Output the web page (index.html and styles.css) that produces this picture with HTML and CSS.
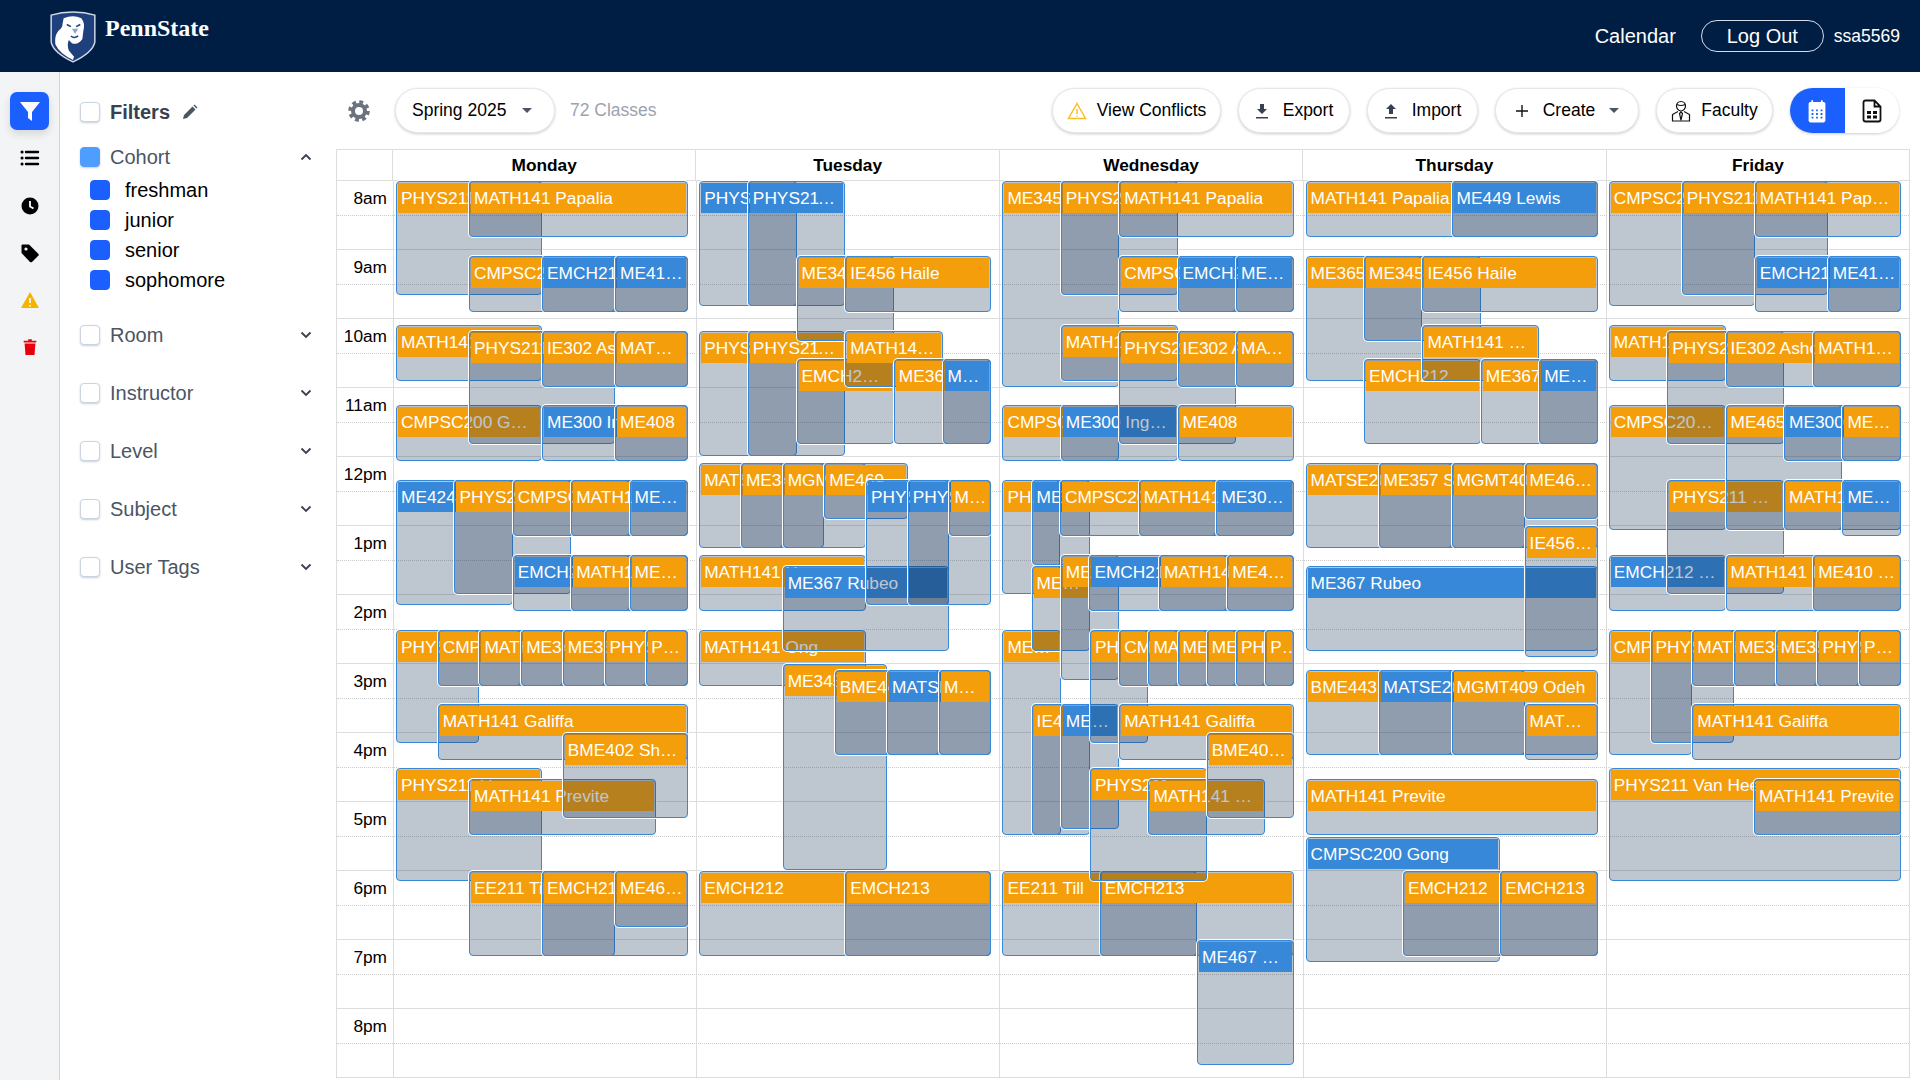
FILE: index.html
```html
<!DOCTYPE html>
<html lang="en">
<head>
    <meta charset="UTF-8">
    <meta name="viewport" content="width=device-width, initial-scale=1.0">
    <title>Class Calendar</title>
    <link rel="stylesheet" href="styles.css">
</head>
<body>

<header class="navbar">
    <div class="brand">
        <svg class="shield" viewBox="0 0 46 50">
            <path d="M2 4 Q12 1 23 1 Q34 1 44 4 V30 Q42 40 23 49 Q4 40 2 30Z" fill="#1e407c" stroke="#d5dbe6" stroke-width="1.4"/>
            <path d="M14 7 Q23 3 31 7 Q35 12 33 19 L32 27 Q28 33 22 31 L19 28 Q17 33 19 38 L24 44 L23 47 Q10 41 6 32 Q5 24 9 19 Q13 16 13 12Z" fill="#fff"/>
            <path d="M17 13 L21 15 M26 15 L30 13 M21 24 Q24 27 28 24" stroke="#1e407c" stroke-width="1.5" fill="none"/>
            <path d="M22 17 L25 22 L28 17Z" fill="#8fa6cc"/>
        </svg>
        <span class="wordmark">PennState</span>
    </div>
    <nav class="nav-right">
        <span class="nav-link">Calendar</span>
        <button class="logout">Log Out</button>
        <span class="user">ssa5569</span>
    </nav>
</header>

<div class="main">
    <aside class="rail">
        <button class="rail-btn active">
            <svg viewBox="0 0 24 24" width="24" height="24"><path d="M2 3h20l-8 10v9l-4-3v-6z" fill="#fff"/></svg>
        </button>
        <button class="rail-btn">
            <svg viewBox="0 0 20 20" width="20" height="20"><path d="M2 4h.1M2 10h.1M2 16h.1" stroke="#000" stroke-width="3" stroke-linecap="round"/><path d="M6 4h12M6 10h12M6 16h12" stroke="#000" stroke-width="2.4" stroke-linecap="round"/></svg>
        </button>
        <button class="rail-btn">
            <svg viewBox="0 0 20 20" width="20" height="20"><circle cx="10" cy="10" r="8.5" fill="#000"/><path d="M10 5v5.5l3.5 2" stroke="#fff" stroke-width="1.8" fill="none"/></svg>
        </button>
        <button class="rail-btn">
            <svg viewBox="0 0 20 20" width="20" height="20"><path d="M1.5 2.5Q1.5 1.5 2.5 1.5H9L18.5 11Q19 12 18.5 12.5L12 19Q11 19.5 10 19L1.5 10Z" fill="#000"/><circle cx="6" cy="6" r="1.6" fill="#f3f4f6"/></svg>
        </button>
        <button class="rail-btn">
            <svg viewBox="0 0 20 20" width="20" height="20"><path d="M10 2L19 18H1Z" fill="#f4b400"/><path d="M10 8v5M10 15v1.4" stroke="#fff" stroke-width="1.6"/></svg>
        </button>
        <button class="rail-btn">
            <svg viewBox="0 0 20 20" width="18" height="18"><path d="M4 6h12l-1 13H5Z M3 3h14v2H3Z M8 1.500h4V3H8Z" fill="#e8000d"/></svg>
        </button>
    </aside>

    <section class="filters">
        <div class="filter-title">
            <span class="check"></span>
            <span class="title-text">Filters</span>
            <svg viewBox="0 0 16 16" width="16" height="16"><path d="M1 15l1-4 8.500-8.500 3 3L5 14Z M11.500 1.500l1-1 3 3-1 1Z" fill="#4b5563"/></svg>
        </div>

        <div class="group-row group-open">
            <span class="check check-soft"></span>
            <span class="group-name">Cohort</span>
            <svg class="chev" viewBox="0 0 12 8" width="12" height="8"><path d="M1.500 6.500L6 2l4.500 4.500" stroke="#374151" stroke-width="1.800" fill="none"/></svg>
        </div>
        <ul class="group-items">
            <li><span class="check check-on"></span>freshman</li>
            <li><span class="check check-on"></span>junior</li>
            <li><span class="check check-on"></span>senior</li>
            <li><span class="check check-on"></span>sophomore</li>
        </ul>

        <div class="group-row">
            <span class="check"></span>
            <span class="group-name">Room</span>
            <svg class="chev" viewBox="0 0 12 8" width="12" height="8"><path d="M1.500 1.500L6 6l4.500-4.500" stroke="#374151" stroke-width="1.800" fill="none"/></svg>
        </div>
        <div class="group-row">
            <span class="check"></span>
            <span class="group-name">Instructor</span>
            <svg class="chev" viewBox="0 0 12 8" width="12" height="8"><path d="M1.500 1.500L6 6l4.500-4.500" stroke="#374151" stroke-width="1.800" fill="none"/></svg>
        </div>
        <div class="group-row">
            <span class="check"></span>
            <span class="group-name">Level</span>
            <svg class="chev" viewBox="0 0 12 8" width="12" height="8"><path d="M1.500 1.500L6 6l4.500-4.500" stroke="#374151" stroke-width="1.800" fill="none"/></svg>
        </div>
        <div class="group-row">
            <span class="check"></span>
            <span class="group-name">Subject</span>
            <svg class="chev" viewBox="0 0 12 8" width="12" height="8"><path d="M1.500 1.500L6 6l4.500-4.500" stroke="#374151" stroke-width="1.800" fill="none"/></svg>
        </div>
        <div class="group-row">
            <span class="check"></span>
            <span class="group-name">User Tags</span>
            <svg class="chev" viewBox="0 0 12 8" width="12" height="8"><path d="M1.500 1.500L6 6l4.500-4.500" stroke="#374151" stroke-width="1.800" fill="none"/></svg>
        </div>
    </section>

    <section class="content">
        <div class="toolbar">
            <svg class="gear" viewBox="0 0 22 22" width="22" height="22">
                <circle cx="11" cy="11" r="6" fill="none" stroke="#6b7280" stroke-width="4"/>
                <circle cx="11" cy="11" r="9" fill="none" stroke="#6b7280" stroke-width="3.600" stroke-dasharray="3.800 3.270"/>
            </svg>
            <button class="pill term">Spring 2025<span class="caret"></span></button>
            <span class="count">72 Classes</span>
            <div class="actions">
                <button class="pill w-conflicts">
                    <svg viewBox="0 0 20 20" width="20" height="20"><path d="M10 2.500L18.500 17.500H1.500Z M10 8v5 M10 14.500v1.200" fill="none" stroke="#fbbf24" stroke-width="1.500"/></svg>
                    View Conflicts
                </button>
                <button class="pill w-export">
                    <svg viewBox="0 0 14 16" width="14" height="16"><path d="M5 1h4v5h3L7 11 2 6h3Z M1 14h12v1.500H1Z" fill="#374151"/></svg>
                    Export
                </button>
                <button class="pill w-import">
                    <svg viewBox="0 0 14 16" width="14" height="16"><path d="M5 11h4V6h3L7 1 2 6h3Z M1 14h12v1.500H1Z" fill="#374151"/></svg>
                    Import
                </button>
                <button class="pill w-create">
                    <svg viewBox="0 0 14 14" width="14" height="14"><path d="M7 1v12M1 7h12" stroke="#111" stroke-width="1.400"/></svg>
                    Create<span class="caret"></span>
                </button>
                <button class="pill w-faculty">
                    <svg viewBox="0 0 20 22" width="20" height="22"><path d="M10 1.500c-3 0-4.500 2-4.500 4.500s2 5 4.500 5 4.500-2.500 4.500-5-1.500-4.500-4.500-4.500Z M6 4.500Q10 6.500 14 4.500 M7 11.500L1.500 14.500V21h17v-6.500L13 11.500 M10 12l-1.500 1.500L10 20l1.500-6.500Z" fill="none" stroke="#111" stroke-width="1.200"/></svg>
                    Faculty
                </button>
                <div class="view-toggle">
                    <button class="toggle-btn toggle-on">
                        <svg viewBox="0 0 18 20" width="22" height="24"><path d="M2 4Q2 2.500 3.500 2.500h11Q16 2.500 16 4v14q0 1.500-1.500 1.500h-11Q2 19.500 2 18Z" fill="#fff"/><path d="M5 1v3M13 1v3" stroke="#fff" stroke-width="1.500"/><path d="M4.500 9.500h1.500M8.250 9.500h1.500M12 9.500h1.500M4.500 12.500h1.500M8.250 12.500h1.500M12 12.500h1.500M4.500 15.500h1.500M8.250 15.500h1.500M12 15.500h1.500" stroke="#1b5fff" stroke-width="1.500"/></svg>
                    </button>
                    <button class="toggle-btn">
                        <svg viewBox="0 0 20 24" width="20" height="24"><path d="M1.500 3.500Q1.500 1.500 3.500 1.500h9l6 6v13q0 2-2 2h-13q-2 0-2-2Z M12.500 1.500V7.500h6" fill="none" stroke="#111" stroke-width="1.800"/><path d="M5 12h4v3H5Z M11 12h4v3h-4Z M5 16.500h4v3H5Z M11 16.500h4v3h-4Z" fill="#111"/></svg>
                    </button>
                </div>
            </div>
        </div>

        <div class="calendar">
            <div class="cal-head">
                <div class="corner"></div>
                <div class="day-name">Monday</div>
                <div class="day-name">Tuesday</div>
                <div class="day-name">Wednesday</div>
                <div class="day-name">Thursday</div>
                <div class="day-name">Friday</div>
            </div>
            <div class="cal-body">
                <div class="hour"><span class="hour-label">8am</span></div>
                <div class="hour"><span class="hour-label">9am</span></div>
                <div class="hour"><span class="hour-label">10am</span></div>
                <div class="hour"><span class="hour-label">11am</span></div>
                <div class="hour"><span class="hour-label">12pm</span></div>
                <div class="hour"><span class="hour-label">1pm</span></div>
                <div class="hour"><span class="hour-label">2pm</span></div>
                <div class="hour"><span class="hour-label">3pm</span></div>
                <div class="hour"><span class="hour-label">4pm</span></div>
                <div class="hour"><span class="hour-label">5pm</span></div>
                <div class="hour"><span class="hour-label">6pm</span></div>
                <div class="hour"><span class="hour-label">7pm</span></div>
                <div class="hour"><span class="hour-label">8pm</span></div>
                <div class="days" id="days">
                    <div class="day"></div>
                    <div class="day"></div>
                    <div class="day"></div>
                    <div class="day"></div>
                    <div class="day"></div>
                </div>
            </div>
        </div>
    </section>
</div>

<script src="calendar.js"></script>
</body>
</html>
```

FILE: styles.css
```css
* {
    box-sizing: border-box;
}
body {
    font-family: "Liberation Sans", Arial, sans-serif;
    margin: 0;
    height: 1080px;
    overflow: hidden;
    background-color: white;
    color: black;
}
button {
    font: inherit;
    color: inherit;
    background: none;
    border: none;
    padding: 0;
}

/* top bar */
.navbar {
    height: 72px;
    background-color: #001e44;
    color: white;
    display: flex;
    align-items: center;
    justify-content: space-between;
    padding: 0 20px 0 49px;
}
.brand {
    display: flex;
    align-items: center;
    gap: 8px;
}
.shield {
    width: 48px;
    height: 52px;
    margin-top: 2px;
}
.wordmark {
    font-family: "Liberation Serif", serif;
    font-weight: bold;
    font-size: 24px;
    margin-bottom: 16px;
}
.nav-right {
    display: flex;
    align-items: center;
}
.nav-link {
    font-size: 20px;
    margin-right: 25px;
}
.logout {
    width: 123px;
    height: 32px;
    border: 1px solid #d5dbe6;
    border-radius: 16px;
    font-size: 20px;
    margin-right: 10px;
}
.user {
    font-size: 17.5px;
}

.main {
    display: flex;
    height: 1008px;
}

/* icon rail */
.rail {
    width: 60px;
    background-color: #f3f4f6;
    border-right: 1px solid #d1d5db;
    padding: 20px 0 0 10px;
    display: flex;
    flex-direction: column;
    gap: 9.3px;
}
.rail-btn {
    width: 39px;
    height: 38px;
    display: flex;
    align-items: center;
    justify-content: center;
    border-radius: 7px;
}
.rail-btn.active {
    background-color: #1b5fff;
    box-shadow: 0 4px 8px rgba(0, 0, 0, 0.12);
}

/* filter panel */
.filters {
    width: 276px;
    padding: 30px 24px 0 20px;
    font-size: 20px;
}
.check {
    width: 20px;
    height: 20px;
    flex: none;
    border: 1px solid #cbd5e1;
    border-radius: 4px;
    background-color: white;
    box-shadow: 0 1px 2px rgba(30, 64, 124, 0.25);
}
.check-soft {
    background-color: #4f9dff;
    border-color: #4f9dff;
}
.check-on {
    background-color: #1b5fff;
    border-color: #1b5fff;
    box-shadow: none;
}
.filter-title {
    display: flex;
    align-items: center;
    height: 20px;
    gap: 10px;
    margin-bottom: 25px;
}
.title-text {
    font-weight: bold;
    color: #374151;
    margin-right: 2px;
}
.group-row {
    display: flex;
    align-items: center;
    height: 58px;
    gap: 10px;
    color: #4b5563;
}
.group-open {
    height: 20px;
    margin-bottom: 8px;
}
.group-name {
    flex: 1;
}
.group-items {
    list-style: none;
    margin: 0 0 11px 0;
    padding: 0 0 0 10px;
    color: black;
}
.group-items li {
    display: flex;
    align-items: center;
    height: 30px;
    gap: 15px;
}

/* toolbar */
.content {
    flex: 1;
    min-width: 0;
    padding-right: 10px;
}
.toolbar {
    height: 77px;
    display: flex;
    align-items: center;
    padding: 0 11px 0 12px;
    font-size: 17.5px;
}
.gear {
    margin-right: 25px;
}
.pill {
    height: 45px;
    display: flex;
    align-items: center;
    justify-content: center;
    gap: 10px;
    border: 1px solid #e5e7eb;
    border-radius: 23px;
    background-color: white;
    box-shadow: 0 1px 3px rgba(0, 0, 0, 0.2);
    white-space: nowrap;
}
.term {
    width: 160px;
    justify-content: flex-start;
    padding-left: 16px;
    gap: 16px;
}
.caret {
    width: 0;
    height: 0;
    border-left: 5px solid transparent;
    border-right: 5px solid transparent;
    border-top: 5px solid #4b5563;
}
.count {
    color: #9ca3af;
    margin-left: 15px;
}
.actions {
    margin-left: auto;
    display: flex;
    align-items: center;
    gap: 17px;
}
.w-conflicts { width: 169px; }
.w-export { width: 112px; gap: 14px; }
.w-import { width: 111px; gap: 14px; }
.w-create { width: 144px; gap: 14px; }
.w-faculty { width: 117px; }
.view-toggle {
    display: flex;
    width: 109px;
    height: 45px;
    border-radius: 23px;
    overflow: hidden;
    box-shadow: 0 1px 3px rgba(0, 0, 0, 0.2);
}
.toggle-btn {
    flex: 1;
    display: flex;
    align-items: center;
    justify-content: center;
    background-color: white;
}
.toggle-on {
    background-color: #1b5fff;
}

/* calendar grid */
.calendar {
    border: 1px solid #ddd;
    border-bottom: none;
}
.cal-head {
    display: flex;
    height: 31px;
    border-bottom: 1px solid #ddd;
}
.corner {
    width: 56px;
    border-right: 1px solid #ddd;
}
.day-name {
    flex: 1;
    text-align: center;
    font-weight: bold;
    font-size: 17.3px;
    line-height: 31px;
    border-right: 1px solid #ddd;
}
.day-name:last-child {
    border-right: none;
}
.cal-body {
    position: relative;
}
.hour {
    position: relative;
    height: 69px;
    border-bottom: 1px solid #ddd;
}
.hour::after {
    content: "";
    position: absolute;
    left: 0;
    right: 0;
    top: 34px;
    border-top: 1px dotted #ccc;
}
.hour-label {
    display: block;
    width: 50px;
    text-align: right;
    font-size: 17.3px;
    line-height: 34px;
}
.days {
    position: absolute;
    left: 56px;
    right: 0;
    top: 0;
    bottom: 0;
    display: flex;
    border-left: 1px solid #ddd;
}
.day {
    position: relative;
    flex: 1;
    border-right: 1px solid #ddd;
}
.day:last-child {
    border-right: none;
}

/* class events */
.event {
    position: absolute;
    border: 1px solid #3788d8;
    border-radius: 4px;
    background-color: rgba(23, 51, 87, 0.28);
    box-shadow: 0 0 0 1px white;
    overflow: hidden;
}
.event-head {
    height: 30px;
    margin: 1px 1px 0 1px;
    padding: 0 3px;
    line-height: 30px;
    font-size: 17.3px;
    color: white;
    white-space: nowrap;
    overflow: hidden;
    text-overflow: ellipsis;
}
.orange {
    background-color: #f59e0b;
}
.blue {
    background-color: #3788d8;
}
```

FILE: calendar.js
```js
// One list per weekday, painted in order, later ones on top.
// [from, to, startMin, endMin, label, colour] - from/to are fractions of the day column, minutes count from 8am
const schedule = [
    [
        [0, .5, 0, 100, 'PHYS211 Van Heer', 'orange'],
        [.25, 1, 0, 50, 'MATH141 Papalia', 'orange'],
        [.25, .75, 65, 115, 'CMPSC200 Gong', 'orange'],
        [.5, 1, 65, 115, 'EMCH212 Zhang', 'blue'],
        [.75, 1, 65, 115, 'ME410 Kim', 'blue'],
        [0, .5, 125, 175, 'MATH141 Ong', 'orange'],
        [0, .5, 195, 245, 'CMPSC200 Gong', 'orange'],
        [.25, .75, 130, 230, 'PHYS211 Van Heer', 'orange'],
        [.5, 1, 130, 180, 'IE302 Ashour', 'orange'],
        [.75, 1, 130, 180, 'MATH141 Lee', 'orange'],
        [.5, 1, 195, 245, 'ME300 Ingalls', 'blue'],
        [.75, 1, 195, 245, 'ME408', 'orange'],
        [0, .4, 260, 370, 'ME424 Ray', 'blue'],
        [.2, .6, 260, 360, 'PHYS211 Hong', 'orange'],
        [.4, .8, 260, 310, 'CMPSC200 Gong', 'orange'],
        [.6, 1, 260, 310, 'MATH141 Lee', 'orange'],
        [.8, 1, 260, 310, 'ME300 Ingalls', 'blue'],
        [.4, .8, 325, 375, 'EMCH212 Zhang', 'blue'],
        [.6, 1, 325, 375, 'MATH141 Lee', 'orange'],
        [.8, 1, 325, 375, 'ME410 Kim', 'orange'],
        [0, 2/7, 390, 490, 'PHYS211 Hong', 'orange'],
        [1/7, 3/7, 390, 440, 'CMPSC200 Gong', 'orange'],
        [2/7, 4/7, 390, 440, 'MATH141 Lee', 'orange'],
        [3/7, 5/7, 390, 440, 'ME345 Bai', 'orange'],
        [4/7, 6/7, 390, 440, 'ME357 Sun', 'orange'],
        [5/7, 1, 390, 440, 'PHYS211 Hong', 'orange'],
        [6/7, 1, 390, 440, 'PHYS211 Hong', 'orange'],
        [1/7, 1, 455, 505, 'MATH141 Galiffa', 'orange'],
        [0, .5, 510, 610, 'PHYS211 Van Heer', 'orange'],
        [.25, .892, 520, 570, 'MATH141 Previte', 'orange'],
        [4/7, 1, 480, 555, 'BME402 Shaffer', 'orange'],
        [.25, .75, 600, 675, 'EE211 Till', 'orange'],
        [.5, 1, 600, 675, 'EMCH213', 'orange'],
        [.75, 1, 600, 650, 'ME467 Rubeo', 'orange']
    ],
    [
        [0, 1/3, 0, 110, 'PHYS211 Hong', 'blue'],
        [1/6, .5, 0, 110, 'PHYS211 Hong', 'blue'],
        [0, 1/3, 130, 240, 'PHYS211 Van Heer', 'orange'],
        [1/6, .5, 130, 240, 'PHYS211 Van Heer', 'orange'],
        [1/3, 2/3, 65, 140, 'ME345 Bai', 'orange'],
        [.5, 1, 65, 115, 'IE456 Haile', 'orange'],
        [1/3, 2/3, 155, 230, 'EMCH212 Zhang', 'orange'],
        [.5, 5/6, 130, 180, 'MATH141 Lee', 'orange'],
        [2/3, 1, 155, 230, 'ME367 Rubeo', 'orange'],
        [5/6, 1, 155, 230, 'ME345 Bai', 'blue'],
        [0, 2/7, 245, 320, 'MATSE201 Wu', 'orange'],
        [1/7, 3/7, 245, 320, 'ME345 Bai', 'orange'],
        [2/7, 4/7, 245, 320, 'MGMT409 Odeh', 'orange'],
        [3/7, 5/7, 245, 295, 'ME469 Ross', 'orange'],
        [0, 4/7, 325, 375, 'MATH141 Hu', 'orange'],
        [0, 4/7, 390, 440, 'MATH141 Ong', 'orange'],
        [2/7, 6/7, 335, 410, 'ME367 Rubeo', 'blue'],
        [4/7, 6/7, 260, 370, 'PHYS211 Hong', 'blue'],
        [5/7, 1, 260, 370, 'PHYS211 Hong', 'blue'],
        [6/7, 1, 260, 310, 'MATH141 Lee', 'orange'],
        [2/7, .643, 420, 600, 'ME345 Bai', 'orange'],
        [.464, .821, 425, 500, 'BME443 Li', 'orange'],
        [.643, 1, 425, 500, 'MATSE201 Wu', 'blue'],
        [.821, 1, 425, 500, 'MGMT409 Odeh', 'orange'],
        [0, 1, 600, 675, 'EMCH212', 'orange'],
        [.5, 1, 600, 675, 'EMCH213', 'orange']
    ],
    [
        [0, .4, 0, 180, 'ME345 Bai', 'orange'],
        [.2, .6, 0, 100, 'PHYS211 Van Heer', 'orange'],
        [.4, 1, 0, 50, 'MATH141 Papalia', 'orange'],
        [.4, .8, 65, 115, 'CMPSC200 Gong', 'orange'],
        [.6, 1, 65, 115, 'EMCH212 Zhang', 'blue'],
        [.8, 1, 65, 115, 'ME410 Kim', 'blue'],
        [.2, .6, 125, 175, 'MATH141 Ong', 'orange'],
        [0, .4, 195, 245, 'CMPSC200 Gong', 'orange'],
        [.2, .6, 195, 245, 'ME300 Ingalls', 'blue'],
        [.4, .8, 130, 230, 'PHYS211 Hong', 'orange'],
        [.6, 1, 130, 180, 'IE302 Ashour', 'orange'],
        [.8, 1, 130, 180, 'MATH141 Lee', 'orange'],
        [.6, 1, 195, 245, 'ME408', 'orange'],
        [0, .197, 260, 360, 'PHYS211 Hong', 'orange'],
        [.1, .3, 260, 335, 'ME345 Bai', 'blue'],
        [.197, .733, 260, 310, 'CMPSC200 Gong', 'orange'],
        [.467, 1, 260, 310, 'MATH141 Lee', 'orange'],
        [.733, 1, 260, 310, 'ME300 Ingalls', 'blue'],
        [0, .2, 390, 570, 'ME345 Bai', 'orange'],
        [.1, .3, 335, 410, 'ME367 Rubeo', 'orange'],
        [.2, .4, 325, 435, 'ME465 Cole', 'orange'],
        [.298, .77, 325, 375, 'EMCH212 Zhang', 'blue'],
        [.536, 1, 325, 375, 'MATH141 Lee', 'orange'],
        [.77, 1, 325, 375, 'ME410 Kim', 'orange'],
        [.1, .3, 455, 570, 'IE456 Haile', 'orange'],
        [.2, .4, 455, 565, 'ME345 Bai', 'blue'],
        [.3, .5, 390, 490, 'PHYS211 Hong', 'orange'],
        [.4, .6, 390, 440, 'CMPSC200 Gong', 'orange'],
        [.5, .7, 390, 440, 'MATH141 Lee', 'orange'],
        [.6, .8, 390, 440, 'ME345 Bai', 'orange'],
        [.7, .9, 390, 440, 'ME357 Sun', 'orange'],
        [.8, 1, 390, 440, 'PHYS211 Hong', 'orange'],
        [.9, 1, 390, 440, 'PHYS211 Hong', 'orange'],
        [.4, 1, 455, 505, 'MATH141 Galiffa', 'orange'],
        [0, 2/3, 600, 675, 'EE211 Till', 'orange'],
        [1/3, 1, 600, 675, 'EMCH213', 'orange'],
        [.3, .7, 510, 610, 'PHYS211 Van Heer', 'orange'],
        [.5, .9, 520, 570, 'MATH141 Previte', 'orange'],
        [.7, 1, 480, 555, 'BME402 Shaffer', 'orange'],
        [2/3, 1, 660, 770, 'ME467 Rubeo', 'blue']
    ],
    [
        [0, 1, 0, 50, 'MATH141 Papalia', 'orange'],
        [.5, 1, 0, 50, 'ME449 Lewis', 'blue'],
        [0, .4, 65, 175, 'ME365 Kim', 'orange'],
        [.2, .6, 65, 140, 'ME345 Bai', 'orange'],
        [.4, 1, 65, 115, 'IE456 Haile', 'orange'],
        [.2, .6, 155, 230, 'EMCH212 Zhang', 'orange'],
        [.4, .8, 125, 175, 'MATH141 Lee', 'orange'],
        [.6, 1, 155, 230, 'ME367 Rubeo', 'orange'],
        [.8, 1, 155, 230, 'ME345 Bai', 'blue'],
        [0, .5, 245, 320, 'MATSE201 Wu', 'orange'],
        [.25, .75, 245, 320, 'ME357 Sun', 'orange'],
        [.5, 1, 245, 320, 'MGMT409 Odeh', 'orange'],
        [.75, 1, 245, 295, 'ME467 Rubeo', 'orange'],
        [0, 1, 335, 410, 'ME367 Rubeo', 'blue'],
        [.75, 1, 300, 415, 'IE456 Haile', 'orange'],
        [0, .5, 425, 500, 'BME443 Li', 'orange'],
        [.25, .75, 425, 500, 'MATSE201 Wu', 'blue'],
        [.5, 1, 425, 500, 'MGMT409 Odeh', 'orange'],
        [.75, 1, 455, 505, 'MATH141 Lee', 'orange'],
        [0, 1, 520, 570, 'MATH141 Previte', 'orange'],
        [0, 2/3, 570, 680, 'CMPSC200 Gong', 'blue'],
        [1/3, 1, 600, 675, 'EMCH212', 'orange'],
        [2/3, 1, 600, 675, 'EMCH213', 'orange']
    ],
    [
        [0, .5, 0, 110, 'CMPSC200 Gong', 'orange'],
        [.25, .75, 0, 100, 'PHYS211 Van Heer', 'orange'],
        [.5, 1, 0, 50, 'MATH141 Papalia', 'orange'],
        [.5, 1, 65, 115, 'EMCH212 Zhang', 'blue'],
        [.75, 1, 65, 115, 'ME410 Kim', 'blue'],
        [0, .4, 125, 175, 'MATH141 Ong', 'orange'],
        [0, .4, 195, 305, 'CMPSC200 Gong', 'orange'],
        [.2, .6, 130, 230, 'PHYS211 Hong', 'orange'],
        [.4, 1, 130, 180, 'IE302 Ashour', 'orange'],
        [.7, 1, 130, 180, 'MATH141 Lee', 'orange'],
        [0, .4, 325, 375, 'EMCH212 Zhang', 'blue'],
        [.2, .6, 260, 360, 'PHYS211 Weaver', 'orange'],
        [.4, .8, 195, 305, 'ME465 Cole', 'orange'],
        [.6, 1, 195, 245, 'ME300 Ingalls', 'blue'],
        [.8, 1, 195, 245, 'ME408 Park', 'orange'],
        [.6, 1, 260, 305, 'MATH141 Lee', 'orange'],
        [.8, 1, 260, 310, 'ME300 Ingalls', 'blue'],
        [.4, 1, 325, 375, 'MATH141 Lee', 'orange'],
        [.7, 1, 325, 375, 'ME410 Kim', 'orange'],
        [0, 2/7, 390, 500, 'CMPSC200 Gong', 'orange'],
        [1/7, 3/7, 390, 490, 'PHYS211 Hong', 'orange'],
        [2/7, 4/7, 390, 440, 'MATH141 Lee', 'orange'],
        [3/7, 5/7, 390, 440, 'ME345 Bai', 'orange'],
        [4/7, 6/7, 390, 440, 'ME357 Sun', 'orange'],
        [5/7, 1, 390, 440, 'PHYS211 Hong', 'orange'],
        [6/7, 1, 390, 440, 'PHYS211 Hong', 'orange'],
        [2/7, 1, 455, 505, 'MATH141 Galiffa', 'orange'],
        [0, 1, 510, 610, 'PHYS211 Van Heer', 'orange'],
        [.497, 1, 520, 570, 'MATH141 Previte', 'orange']
    ]
];

const PX_PER_MIN = 1.15;
const INSET = 2;
const LANE_WIDTH = 292;

const dayColumns = document.querySelectorAll('#days .day');

schedule.forEach((events, dayIndex) => {
    events.forEach(([from, to, start, end, label, colour]) => {
        const box = document.createElement('div');
        box.className = 'event';
        box.style.left = (INSET + from * LANE_WIDTH) + 'px';
        box.style.width = ((to - from) * LANE_WIDTH) + 'px';
        box.style.top = (start * PX_PER_MIN) + 'px';
        box.style.height = ((end - start) * PX_PER_MIN - 1.5) + 'px';

        const head = document.createElement('div');
        head.className = 'event-head ' + colour;
        head.textContent = label;
        box.appendChild(head);

        dayColumns[dayIndex].appendChild(box);
    });
});
```
